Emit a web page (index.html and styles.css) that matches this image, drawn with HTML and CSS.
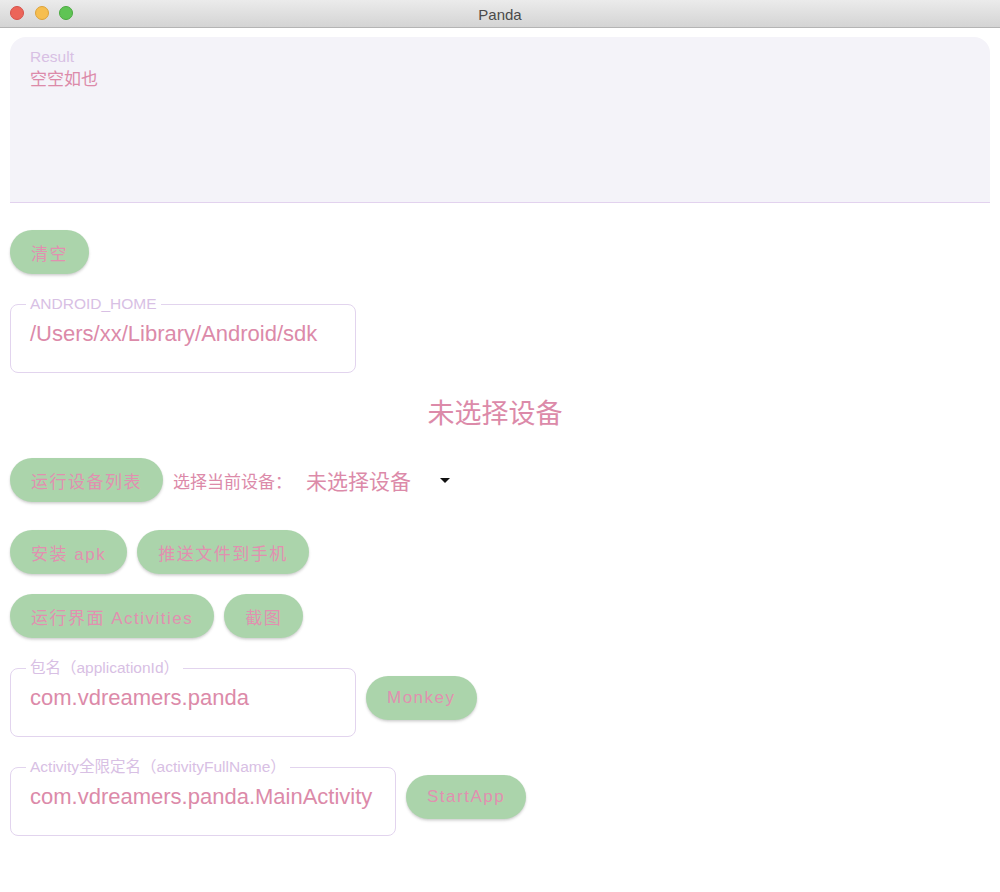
FILE: index.html
```html
<!DOCTYPE html>
<html lang="zh">
<head>
<meta charset="utf-8">
<title>Panda</title>
<link rel="stylesheet" href="styles.css">
</head>
<body>
<div class="window">
  <header class="titlebar">
    <div class="lights">
      <span class="light red"></span>
      <span class="light yellow"></span>
      <span class="light green"></span>
    </div>
    <div class="title">Panda</div>
  </header>
  <main class="content">
    <section class="result">
      <div class="result-label">Result</div>
      <div class="result-text">空空如也</div>
    </section>

    <div class="row row-clear">
      <button class="btn">清空</button>
    </div>

    <fieldset class="field field-home">
      <legend>ANDROID_HOME</legend>
      <div class="field-value">/Users/xx/Library/Android/sdk</div>
    </fieldset>

    <h2 class="device-title">未选择设备</h2>

    <div class="row row-devices">
      <button class="btn">运行设备列表</button>
      <span class="select-label">选择当前设备：</span>
      <div class="select">
        <span class="select-value">未选择设备</span>
        <span class="caret"></span>
      </div>
    </div>

    <div class="row row-install">
      <button class="btn">安装 apk</button>
      <button class="btn">推送文件到手机</button>
    </div>

    <div class="row row-activities">
      <button class="btn">运行界面 Activities</button>
      <button class="btn">截图</button>
    </div>

    <div class="row row-pkg">
      <fieldset class="field field-pkg">
        <legend>包名（applicationId）</legend>
        <div class="field-value">com.vdreamers.panda</div>
      </fieldset>
      <button class="btn">Monkey</button>
    </div>

    <div class="row row-act">
      <fieldset class="field field-act">
        <legend>Activity全限定名（activityFullName）</legend>
        <div class="field-value">com.vdreamers.panda.MainActivity</div>
      </fieldset>
      <button class="btn">StartApp</button>
    </div>
  </main>
</div>
</body>
</html>
```

FILE: styles.css
```css
* { box-sizing: border-box; }

html, body {
  margin: 0;
  padding: 0;
  background: #ffffff;
}

body {
  font-family: "Liberation Sans", "Noto Sans CJK SC", sans-serif;
  color: #dc8aa9;
}

.window {
  width: 1000px;
  height: 892px;
  background: #fff;
}

.titlebar {
  position: relative;
  height: 28px;
  background: linear-gradient(#ebebeb, #d4d4d4);
  border-bottom: 1px solid #b4b4b4;
  display: flex;
  align-items: center;
  justify-content: center;
}

.lights {
  position: absolute;
  left: 10px;
  top: 6px;
  display: flex;
  gap: 10.5px;
}

.light {
  width: 14px;
  height: 14px;
  border-radius: 50%;
  display: block;
}
.light.red { background: #ec6559; border: 1px solid #d6504a; }
.light.yellow { background: #f6be4f; border: 1px solid #dca23a; }
.light.green { background: #5fc454; border: 1px solid #4aa93f; }

.title {
  font-family: "Liberation Sans", sans-serif;
  font-size: 15px;
  color: #4a4a4a;
  padding-top: 1px;
}

.content {
  padding: 9px 10px 0 10px;
}

.result {
  height: 166px;
  background: #f4f3f9;
  border-radius: 16px 16px 0 0;
  border-bottom: 1px solid #e2d2ee;
  padding: 11px 20px 0 20px;
}

.result-label {
  font-size: 15.5px;
  color: #d8c0e4;
  line-height: 18px;
}

.result-text {
  font-size: 17px;
  line-height: 24px;
  color: #dc8aa9;
  font-family: "Noto Sans CJK SC", sans-serif;
}

.row {
  display: flex;
  align-items: center;
  gap: 10px;
}

.btn {
  height: 44px;
  border: none;
  border-radius: 22px;
  background: #abd4ab;
  color: #e190b0;
  font-family: "Liberation Sans", "Noto Sans CJK SC", sans-serif;
  font-size: 17px;
  letter-spacing: 1.5px;
  padding: 0 21px;
  box-shadow: 0 2px 3px rgba(0, 0, 0, 0.12), 0 1px 2px rgba(0, 0, 0, 0.08);
  white-space: nowrap;
  flex: none;
}

.row-clear { margin-top: 27px; }

.field {
  margin: 0;
  border: 1px solid #e2d4ee;
  border-radius: 8px;
  padding: 0 19px;
  height: 78px;
  min-width: 0;
}

.field legend {
  font-size: 15.5px;
  color: #d8c0e4;
  padding: 0 4px;
  margin-left: -4px;
  line-height: 18px;
}

.field-value {
  font-size: 22px;
  color: #dc8aa9;
  line-height: 26px;
  margin-top: 8px;
  white-space: nowrap;
}

.field-home {
  width: 346px;
  margin-top: 21px;
}

.device-title {
  margin: 21px 0 0 0;
  text-align: center;
  font-weight: normal;
  font-size: 27px;
  line-height: 36px;
  color: #dc8aa9;
  font-family: "Noto Sans CJK SC", sans-serif;
  padding-right: 10px;
}

.row-devices { margin-top: 28px; }

.select-label {
  font-size: 17px;
  color: #dc8aa9;
  font-family: "Noto Sans CJK SC", sans-serif;
}

.select {
  display: flex;
  align-items: center;
  margin-left: 4px;
}

.select-value {
  font-size: 21px;
  font-family: "Noto Sans CJK SC", sans-serif;
  color: #dc8aa9;
}

.caret {
  width: 0;
  height: 0;
  border-left: 5px solid transparent;
  border-right: 5px solid transparent;
  border-top: 5px solid #111;
  margin-left: 29px;
}

.row-install { margin-top: 28px; }
.row-activities { margin-top: 20px; }

.row-pkg { margin-top: 21px; }
.field-pkg { width: 346px; }

.row-act { margin-top: 21px; }
.field-act { width: 386px; }
```
